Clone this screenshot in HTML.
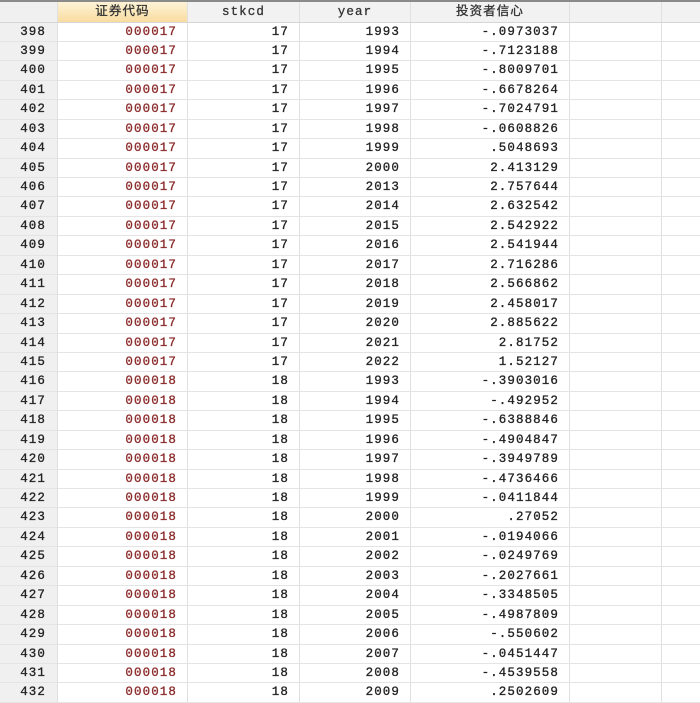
<!DOCTYPE html>
<html><head><meta charset="utf-8"><style>
body{margin:0;width:700px;height:700px;overflow:hidden;background:#fff;font-family:"Liberation Mono","Noto Sans CJK SC",monospace;font-size:12.5px;letter-spacing:1.1px;color:#222;-webkit-text-stroke:0.3px}
.top{height:2px;background:#8a8a8a}
.r{display:flex;height:19.45px;line-height:19px;box-sizing:border-box;border-bottom:1px solid #e4e4e4}
.r div{box-sizing:border-box;border-right:1px solid #e0e0e0;text-align:right;padding-right:10px;white-space:nowrap;overflow:hidden}
.c0{width:58px;background:#f0f0f0;padding-right:11px!important}
.c1{width:130px;color:#8b2a2a}
.c2{width:112px}.c3{width:111px}.c4{width:159px}.c5{width:92px}.c6{width:38px;border-right:none!important}
.h{height:20.5px;line-height:20px;background:#f2f2f2;border-bottom:1px solid #d6d6d6}
.h div{text-align:center!important;padding-right:0!important;color:#333}
.h .c1{background:linear-gradient(#fdf3d6,#f9dca0);color:#333}
</style></head><body>
<div class="top"></div>
<div class="r h"><div class="c0"></div><div class="c1">证券代码</div><div class="c2">stkcd</div><div class="c3">year</div><div class="c4">投资者信心</div><div class="c5"></div><div class="c6"></div></div>
<div class="r"><div class="c0">398</div><div class="c1">000017</div><div class="c2">17</div><div class="c3">1993</div><div class="c4">-.0973037</div><div class="c5"></div><div class="c6"></div></div>
<div class="r"><div class="c0">399</div><div class="c1">000017</div><div class="c2">17</div><div class="c3">1994</div><div class="c4">-.7123188</div><div class="c5"></div><div class="c6"></div></div>
<div class="r"><div class="c0">400</div><div class="c1">000017</div><div class="c2">17</div><div class="c3">1995</div><div class="c4">-.8009701</div><div class="c5"></div><div class="c6"></div></div>
<div class="r"><div class="c0">401</div><div class="c1">000017</div><div class="c2">17</div><div class="c3">1996</div><div class="c4">-.6678264</div><div class="c5"></div><div class="c6"></div></div>
<div class="r"><div class="c0">402</div><div class="c1">000017</div><div class="c2">17</div><div class="c3">1997</div><div class="c4">-.7024791</div><div class="c5"></div><div class="c6"></div></div>
<div class="r"><div class="c0">403</div><div class="c1">000017</div><div class="c2">17</div><div class="c3">1998</div><div class="c4">-.0608826</div><div class="c5"></div><div class="c6"></div></div>
<div class="r"><div class="c0">404</div><div class="c1">000017</div><div class="c2">17</div><div class="c3">1999</div><div class="c4">.5048693</div><div class="c5"></div><div class="c6"></div></div>
<div class="r"><div class="c0">405</div><div class="c1">000017</div><div class="c2">17</div><div class="c3">2000</div><div class="c4">2.413129</div><div class="c5"></div><div class="c6"></div></div>
<div class="r"><div class="c0">406</div><div class="c1">000017</div><div class="c2">17</div><div class="c3">2013</div><div class="c4">2.757644</div><div class="c5"></div><div class="c6"></div></div>
<div class="r"><div class="c0">407</div><div class="c1">000017</div><div class="c2">17</div><div class="c3">2014</div><div class="c4">2.632542</div><div class="c5"></div><div class="c6"></div></div>
<div class="r"><div class="c0">408</div><div class="c1">000017</div><div class="c2">17</div><div class="c3">2015</div><div class="c4">2.542922</div><div class="c5"></div><div class="c6"></div></div>
<div class="r"><div class="c0">409</div><div class="c1">000017</div><div class="c2">17</div><div class="c3">2016</div><div class="c4">2.541944</div><div class="c5"></div><div class="c6"></div></div>
<div class="r"><div class="c0">410</div><div class="c1">000017</div><div class="c2">17</div><div class="c3">2017</div><div class="c4">2.716286</div><div class="c5"></div><div class="c6"></div></div>
<div class="r"><div class="c0">411</div><div class="c1">000017</div><div class="c2">17</div><div class="c3">2018</div><div class="c4">2.566862</div><div class="c5"></div><div class="c6"></div></div>
<div class="r"><div class="c0">412</div><div class="c1">000017</div><div class="c2">17</div><div class="c3">2019</div><div class="c4">2.458017</div><div class="c5"></div><div class="c6"></div></div>
<div class="r"><div class="c0">413</div><div class="c1">000017</div><div class="c2">17</div><div class="c3">2020</div><div class="c4">2.885622</div><div class="c5"></div><div class="c6"></div></div>
<div class="r"><div class="c0">414</div><div class="c1">000017</div><div class="c2">17</div><div class="c3">2021</div><div class="c4">2.81752</div><div class="c5"></div><div class="c6"></div></div>
<div class="r"><div class="c0">415</div><div class="c1">000017</div><div class="c2">17</div><div class="c3">2022</div><div class="c4">1.52127</div><div class="c5"></div><div class="c6"></div></div>
<div class="r"><div class="c0">416</div><div class="c1">000018</div><div class="c2">18</div><div class="c3">1993</div><div class="c4">-.3903016</div><div class="c5"></div><div class="c6"></div></div>
<div class="r"><div class="c0">417</div><div class="c1">000018</div><div class="c2">18</div><div class="c3">1994</div><div class="c4">-.492952</div><div class="c5"></div><div class="c6"></div></div>
<div class="r"><div class="c0">418</div><div class="c1">000018</div><div class="c2">18</div><div class="c3">1995</div><div class="c4">-.6388846</div><div class="c5"></div><div class="c6"></div></div>
<div class="r"><div class="c0">419</div><div class="c1">000018</div><div class="c2">18</div><div class="c3">1996</div><div class="c4">-.4904847</div><div class="c5"></div><div class="c6"></div></div>
<div class="r"><div class="c0">420</div><div class="c1">000018</div><div class="c2">18</div><div class="c3">1997</div><div class="c4">-.3949789</div><div class="c5"></div><div class="c6"></div></div>
<div class="r"><div class="c0">421</div><div class="c1">000018</div><div class="c2">18</div><div class="c3">1998</div><div class="c4">-.4736466</div><div class="c5"></div><div class="c6"></div></div>
<div class="r"><div class="c0">422</div><div class="c1">000018</div><div class="c2">18</div><div class="c3">1999</div><div class="c4">-.0411844</div><div class="c5"></div><div class="c6"></div></div>
<div class="r"><div class="c0">423</div><div class="c1">000018</div><div class="c2">18</div><div class="c3">2000</div><div class="c4">.27052</div><div class="c5"></div><div class="c6"></div></div>
<div class="r"><div class="c0">424</div><div class="c1">000018</div><div class="c2">18</div><div class="c3">2001</div><div class="c4">-.0194066</div><div class="c5"></div><div class="c6"></div></div>
<div class="r"><div class="c0">425</div><div class="c1">000018</div><div class="c2">18</div><div class="c3">2002</div><div class="c4">-.0249769</div><div class="c5"></div><div class="c6"></div></div>
<div class="r"><div class="c0">426</div><div class="c1">000018</div><div class="c2">18</div><div class="c3">2003</div><div class="c4">-.2027661</div><div class="c5"></div><div class="c6"></div></div>
<div class="r"><div class="c0">427</div><div class="c1">000018</div><div class="c2">18</div><div class="c3">2004</div><div class="c4">-.3348505</div><div class="c5"></div><div class="c6"></div></div>
<div class="r"><div class="c0">428</div><div class="c1">000018</div><div class="c2">18</div><div class="c3">2005</div><div class="c4">-.4987809</div><div class="c5"></div><div class="c6"></div></div>
<div class="r"><div class="c0">429</div><div class="c1">000018</div><div class="c2">18</div><div class="c3">2006</div><div class="c4">-.550602</div><div class="c5"></div><div class="c6"></div></div>
<div class="r"><div class="c0">430</div><div class="c1">000018</div><div class="c2">18</div><div class="c3">2007</div><div class="c4">-.0451447</div><div class="c5"></div><div class="c6"></div></div>
<div class="r"><div class="c0">431</div><div class="c1">000018</div><div class="c2">18</div><div class="c3">2008</div><div class="c4">-.4539558</div><div class="c5"></div><div class="c6"></div></div>
<div class="r"><div class="c0">432</div><div class="c1">000018</div><div class="c2">18</div><div class="c3">2009</div><div class="c4">.2502609</div><div class="c5"></div><div class="c6"></div></div>
</body></html>
